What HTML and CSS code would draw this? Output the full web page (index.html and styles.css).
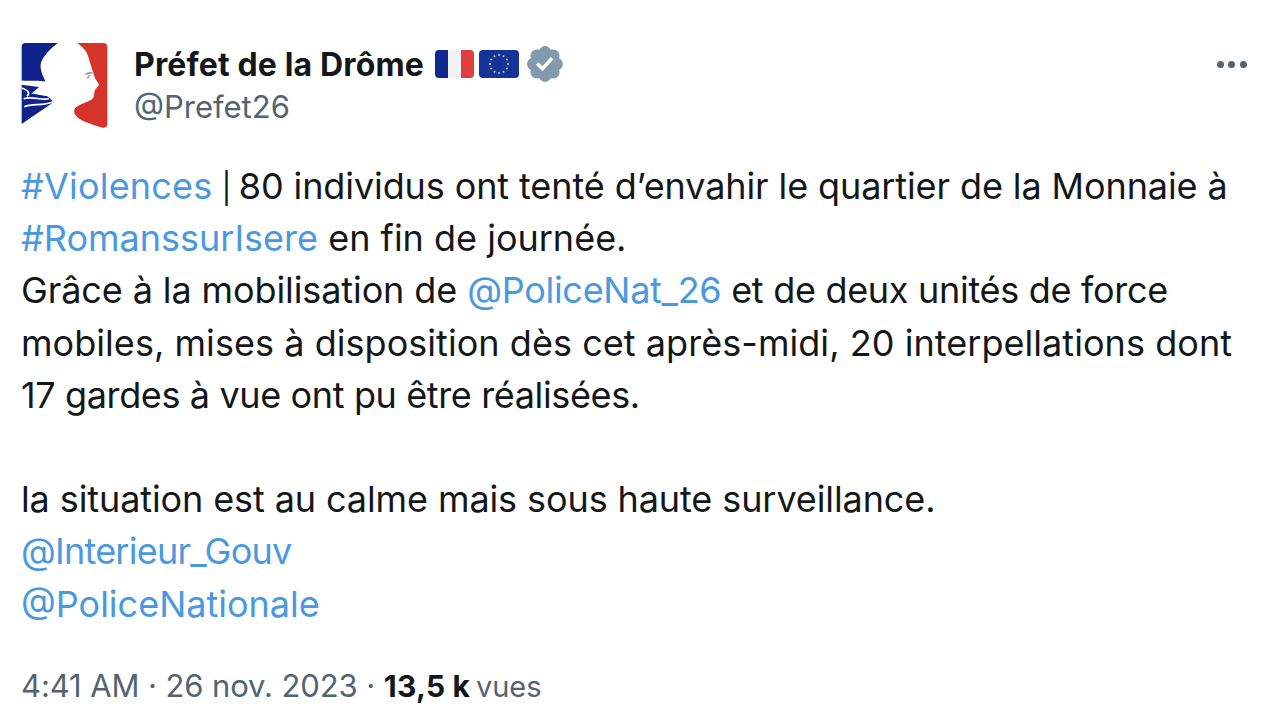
FILE: index.html
```html
<!DOCTYPE html>
<html lang="fr">
<head>
<meta charset="utf-8">
<title>Préfet de la Drôme</title>
<link rel="stylesheet" href="styles.css">
</head>
<body>
<main class="tweet">
  <header class="head">
    <svg class="logo" viewBox="60 36 268 266" aria-hidden="true">
      <path fill="#10228c" d="M74 38H172C150 55 130 75 122 95C116 110 122 130 135 155C110 150 85 155 62 152V50Q62 38 74 38Z"/>
      <path fill="#10228c" d="M62 165L115 172L92 192L140 200L160 218L62 285Z"/>
      <path fill="none" stroke="#fff" stroke-width="5" d="M62 158C85 150 110 168 132 165M62 175C80 180 90 190 78 200M68 208C95 198 120 214 145 208M70 232C95 220 125 232 160 216"/>
      <path fill="#d5342a" d="M232 38H310Q323 38 323 50V285Q323 298 308 296C290 292 280 288 265 282C240 272 222 262 222 245C222 225 270 220 280 205C285 195 280 185 290 175L298 165L285 145C280 125 270 100 265 80C260 60 245 50 232 38Z"/>
      <path fill="none" stroke="#9a8a90" stroke-width="4" d="M256 134C264 128 272 128 278 130M262 146L270 136"/>
    </svg>
    <div class="who">
      <div class="name-row">
        <span class="name">Préfet de la Drôme</span>
        <svg class="flag" viewBox="0 0 39 28" aria-hidden="true">
          <rect width="39" height="28" rx="4" fill="#f1f2f6"/>
          <path fill="#0f2a8f" d="M13 0H4Q0 0 0 4V24Q0 28 4 28H13Z"/>
          <path fill="#e23d3f" d="M26 0H35Q39 0 39 4V24Q39 28 35 28H26Z"/>
        </svg>
        <svg class="flag eu" viewBox="0 0 40 28" aria-hidden="true">
          <rect width="40" height="28" rx="4" fill="#14349a"/>
          <g fill="#d9cf7c">
            <circle cx="20" cy="5" r="1"/><circle cx="24.5" cy="6.2" r="1"/><circle cx="27.8" cy="9.5" r="1"/><circle cx="29" cy="14" r="1"/><circle cx="27.8" cy="18.5" r="1"/><circle cx="24.5" cy="21.8" r="1"/><circle cx="20" cy="23" r="1"/><circle cx="15.5" cy="21.8" r="1"/><circle cx="12.2" cy="18.5" r="1"/><circle cx="11" cy="14" r="1"/><circle cx="12.2" cy="9.5" r="1"/><circle cx="15.5" cy="6.2" r="1"/>
          </g>
        </svg>
        <svg class="badge" viewBox="0 0 22 22" aria-hidden="true">
          <path fill="#829aab" d="M20.396 11c-.018-.646-.215-1.275-.57-1.816-.354-.54-.852-.972-1.438-1.246.223-.607.27-1.264.14-1.897-.131-.634-.437-1.218-.882-1.687-.47-.445-1.053-.75-1.687-.882-.633-.13-1.29-.083-1.897.14-.273-.587-.704-1.086-1.245-1.44S11.647 1.62 11 1.604c-.646.017-1.273.213-1.813.568s-.969.854-1.24 1.44c-.608-.223-1.267-.272-1.902-.14-.635.13-1.22.436-1.69.882-.445.47-.749 1.055-.878 1.688-.13.633-.08 1.29.144 1.896-.587.274-1.087.705-1.443 1.245-.356.54-.555 1.17-.574 1.817.02.647.218 1.276.574 1.817.356.54.856.972 1.443 1.245-.224.606-.274 1.263-.144 1.896.13.634.433 1.218.877 1.688.47.443 1.054.747 1.687.878.633.132 1.29.084 1.897-.136.274.586.705 1.084 1.246 1.439.54.354 1.17.551 1.816.569.647-.016 1.276-.213 1.817-.567s.972-.854 1.245-1.44c.604.239 1.266.296 1.903.164.636-.132 1.22-.447 1.68-.907.46-.46.776-1.044.908-1.681s.075-1.299-.165-1.903c.586-.274 1.084-.705 1.439-1.246.354-.54.551-1.17.569-1.816z"/>
          <path fill="#fff" d="M9.662 14.85l-3.429-3.428 1.293-1.302 2.072 2.072 4.4-4.794 1.347 1.246z"/>
        </svg>
      </div>
      <div class="handle">@Prefet26</div>
    </div>
    <div class="more" aria-label="Plus"><i></i><i></i><i></i></div>
  </header>
  <p class="body"><a class="open">#Violences</a> <span class="pipe">|</span> <span class="tight-1">80 individus ont tenté d’envahir le quartier de la Monnaie à</span><br><a>#RomanssurIsere</a> en fin de journée.<br><span class="tight-1">Grâce à la mobilisation de</span> <span class="tight-3"><a>@PoliceNat_26</a> et de deux unités de force</span><br><span class="open-4">mobiles, mises à disposition dès cet après-midi, 20 interpellations dont</span><br><span class="tight-4">17 gardes à vue ont pu être réalisées.</span><br><br><span class="tight-1">la situation est au calme mais sous haute surveillance.</span><br><a class="tight-5">@Interieur_Gouv</a><br><a>@PoliceNationale</a></p>
  <footer class="meta"><span class="stamp">4:41 AM · 26 nov. 2023 ·</span> <b>13,5 k</b> <span class="vues">vues</span></footer>
</main>
</body>
</html>
```

FILE: styles.css
```css
html, body {
  margin: 0;
  background: #fff;
}
.tweet {
  width: 1280px;
  height: 726px;
  box-sizing: border-box;
  padding: 42px 33px 0 21px;
  overflow: hidden;
  font-family: Inter, "Liberation Sans", sans-serif;
  color: #14171a;
}
.head {
  display: flex;
  align-items: flex-start;
  height: 89px;
}
.logo {
  width: 88px;
  height: 88px;
  flex: none;
}
.who {
  margin-left: 25px;
  flex: 1;
}
.name-row {
  display: flex;
  align-items: center;
  height: 44px;
}
.name {
  font-size: 32px;
  font-weight: 700;
  letter-spacing: 0.15px;
}
.flag {
  width: 39px;
  height: 28px;
  margin-left: 11px;
  flex: none;
}
.eu {
  width: 40px;
  margin-left: 5px;
}
.badge {
  width: 42px;
  height: 42px;
  margin-left: 5px;
  flex: none;
}
.handle {
  font-size: 31px;
  line-height: 42px;
  color: #536471;
}
.more {
  display: flex;
  gap: 4.7px;
  margin-top: 19px;
}
.more i {
  width: 7px;
  height: 7px;
  border-radius: 50%;
  background: #536471;
}
.body {
  margin: 29px 0 0;
  font-size: 36px;
  line-height: 52.2px;
  white-space: nowrap;
}
.body a {
  color: #4a99e0;
}
.open {
  letter-spacing: 0.2px;
}
.open-4 {
  letter-spacing: 0.05px;
}
.tight-1 {
  letter-spacing: -0.1px;
}
.tight-3 {
  letter-spacing: -0.3px;
}
.tight-4 {
  letter-spacing: -0.37px;
}
.tight-5 {
  letter-spacing: -0.75px;
}
.pipe {
  font-size: 30px;
  line-height: 0;
  margin-left: -1px;
  margin-right: -3px;
}
.meta {
  margin-top: 34px;
  font-size: 31px;
  line-height: 44px;
  color: #536471;
}
.stamp {
  letter-spacing: -0.1px;
}
.meta b {
  color: #14171a;
  font-weight: 700;
  font-size: 30px;
  letter-spacing: 0.2px;
}
.vues {
  font-size: 29px;
  margin-left: -3px;
}
```
